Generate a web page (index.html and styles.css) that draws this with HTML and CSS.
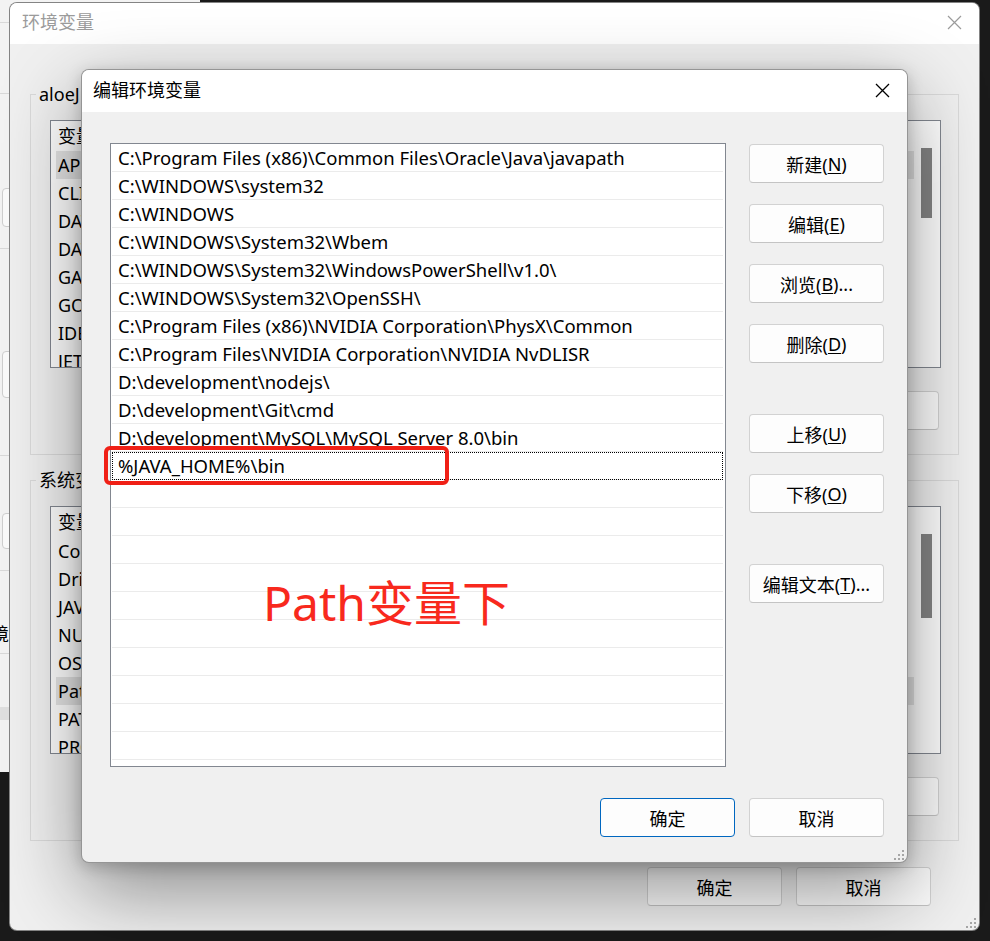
FILE: index.html
```html
<!DOCTYPE html>
<html lang="zh-CN">
<head>
<meta charset="utf-8">
<title>编辑环境变量</title>
<link rel="stylesheet" href="styles.css">
</head>
<body>
<div class="behind">
  <div class="bh-seg bh-s1"></div>
  <div class="bh-seg bh-s2"></div>
  <div class="bh-btn bh-b1"></div>
  <div class="bh-line bh-l1"></div>
  <div class="bh-btn bh-b2"></div>
  <div class="bh-line bh-l2"></div>
  <div class="bh-btn bh-b3"></div>
  <div class="bh-line bh-l3"></div>
  <div class="bh-text">环境</div>
  <div class="bh-line bh-l4"></div>
  <div class="bh-band"></div>
</div>

<div class="window outer">
  <div class="titlebar">
    <span class="title-text">环境变量</span>
    <svg class="close" width="15" height="15" viewBox="0 0 15 15"><path d="M1 1L14 14M14 1L1 14" stroke="currentColor" stroke-width="1.2" fill="none"/></svg>
  </div>
  <div class="outer-body">
    <div class="group">
      <div class="group-label">aloeJ 的用户变量(<u>U</u>)</div>
      <div class="vlist">
        <div class="vlist-main">
          <div class="vhead">变量</div>
          <div class="vrow sel">APPCODE_VM_OPTIONS</div>
          <div class="vrow">CLION_VM_OPTIONS</div>
          <div class="vrow">DATAGRIP_VM_OPTIONS</div>
          <div class="vrow">DATASPELL_VM_OPTIONS</div>
          <div class="vrow">GATEWAY_VM_OPTIONS</div>
          <div class="vrow">GOLAND_VM_OPTIONS</div>
          <div class="vrow">IDEA_VM_OPTIONS</div>
          <div class="vrow">JETBRAINSCLIENT_VM_OPTIONS</div>
        </div>
        <div class="vscroll"><div class="thumb thumb-user"></div></div>
      </div>
      <div class="gbtns">
        <div class="btn"></div>
        <div class="btn"></div>
        <div class="btn"></div>
      </div>
    </div>
    <div class="group">
      <div class="group-label">系统变量(<u>S</u>)</div>
      <div class="vlist">
        <div class="vlist-main">
          <div class="vhead">变量</div>
          <div class="vrow">ComSpec</div>
          <div class="vrow">DriverData</div>
          <div class="vrow">JAVA_HOME</div>
          <div class="vrow">NUMBER_OF_PROCESSORS</div>
          <div class="vrow">OS</div>
          <div class="vrow sel">Path</div>
          <div class="vrow">PATHEXT</div>
          <div class="vrow">PROCESSOR_ARCHITECTURE</div>
        </div>
        <div class="vscroll"><div class="thumb thumb-sys"></div></div>
      </div>
      <div class="gbtns">
        <div class="btn"></div>
        <div class="btn"></div>
        <div class="btn"></div>
      </div>
    </div>
    <div class="outer-foot">
      <div class="btn">确定</div>
      <div class="btn">取消</div>
    </div>
  </div>
  <svg class="grip" width="12" height="12" viewBox="0 0 12 12"><g fill="#a6a6a6"><rect x="9" y="1" width="2" height="2"/><rect x="5" y="5" width="2" height="2"/><rect x="9" y="5" width="2" height="2"/><rect x="1" y="9" width="2" height="2"/><rect x="5" y="9" width="2" height="2"/><rect x="9" y="9" width="2" height="2"/></g></svg>
</div>

<div class="window dialog">
  <div class="titlebar">
    <span class="title-text">编辑环境变量</span>
    <svg class="close" width="15" height="15" viewBox="0 0 15 15"><path d="M1 1L14 14M14 1L1 14" stroke="currentColor" stroke-width="1.3" fill="none"/></svg>
  </div>
  <div class="dbody">
    <div class="dmain">
      <div class="plist">
        <div class="prow">C:\Program Files (x86)\Common Files\Oracle\Java\javapath</div>
        <div class="prow">C:\WINDOWS\system32</div>
        <div class="prow">C:\WINDOWS</div>
        <div class="prow">C:\WINDOWS\System32\Wbem</div>
        <div class="prow">C:\WINDOWS\System32\WindowsPowerShell\v1.0\</div>
        <div class="prow">C:\WINDOWS\System32\OpenSSH\</div>
        <div class="prow">C:\Program Files (x86)\NVIDIA Corporation\PhysX\Common</div>
        <div class="prow">C:\Program Files\NVIDIA Corporation\NVIDIA NvDLISR</div>
        <div class="prow">D:\development\nodejs\</div>
        <div class="prow">D:\development\Git\cmd</div>
        <div class="prow">D:\development\MySQL\MySQL Server 8.0\bin</div>
        <div class="prow edit">%JAVA_HOME%\bin</div>
        <div class="prow"></div>
        <div class="prow"></div>
        <div class="prow"></div>
        <div class="prow"></div>
        <div class="prow"></div>
        <div class="prow"></div>
        <div class="prow"></div>
        <div class="prow"></div>
        <div class="prow"></div>
        <div class="prow"></div>
        <div class="prow"></div>
      </div>
      <div class="dbtns">
        <div class="btn">新建(<u>N</u>)</div>
        <div class="btn">编辑(<u>E</u>)</div>
        <div class="btn">浏览(<u>B</u>)...</div>
        <div class="btn">删除(<u>D</u>)</div>
        <div class="btn sp">上移(<u>U</u>)</div>
        <div class="btn">下移(<u>O</u>)</div>
        <div class="btn sp">编辑文本(<u>T</u>)...</div>
      </div>
    </div>
    <div class="dfoot">
      <div class="btn primary">确定</div>
      <div class="btn">取消</div>
    </div>
  </div>
  <svg class="grip" width="12" height="12" viewBox="0 0 12 12"><g fill="#a6a6a6"><rect x="9" y="1" width="2" height="2"/><rect x="5" y="5" width="2" height="2"/><rect x="9" y="5" width="2" height="2"/><rect x="1" y="9" width="2" height="2"/><rect x="5" y="9" width="2" height="2"/><rect x="9" y="9" width="2" height="2"/></g></svg>
</div>

<div class="anno-box"></div>
<div class="anno-text">Path变量下</div>
</body>
</html>
```

FILE: styles.css
```css
* { box-sizing: border-box; }
html, body { margin: 0; padding: 0; }
body {
  width: 990px;
  height: 941px;
  overflow: hidden;
  position: relative;
  background: #1a1a1a;
  font-family: "Noto Sans", "Noto Sans CJK SC", sans-serif;
  font-size: 18px;
  color: #000;
}
u { text-underline-offset: 2px; }

/* window partly visible behind */
.behind {
  position: absolute;
  left: 0; top: 0;
  width: 200px; height: 772px;
  background: #f3f3f3;
  display: flex;
  flex-direction: column;
}
.bh-seg { border-bottom: 1px solid #d9d9d9; flex: none; }
.bh-s1 { height: 23px; }
.bh-s2 { height: 71px; }
.bh-btn { flex: none; margin-left: 2px; border: 1px solid #cfcfcf; border-radius: 4px; background: #fbfbfb; }
.bh-b1 { margin-top: 94px; height: 39px; }
.bh-b2 { margin-top: 102px; height: 47px; }
.bh-b3 { margin-top: 57px; height: 36px; }
.bh-line { flex: none; height: 1px; background: #d9d9d9; }
.bh-l1 { margin-top: 21px; }
.bh-l2 { margin-top: 57px; }
.bh-l3 { margin-top: 21px; }
.bh-text { margin-top: 50px; margin-left: -27px; line-height: 26px; font-size: 18px; }
.bh-l4 { margin-top: 6px; }
.bh-band { margin-top: 53px; height: 13px; background: #e0e0e0; }

/* windows */
.window {
  position: absolute;
  background: #f0f0f0;
  border-radius: 8px;
  overflow: hidden;
  display: flex;
  flex-direction: column;
}
.titlebar {
  flex: none;
  background: #fff;
  display: flex;
  align-items: center;
  justify-content: space-between;
}
.title-text { font-size: 18px; line-height: 24px; }
.close { display: block; }

.outer {
  left: 9px; top: 2px;
  width: 971px; height: 929px;
  border: 1px solid rgba(0, 0, 0, 0.45);
}
.outer .titlebar {
  height: 41px;
  padding: 0 17px 3px 12px;
  color: #9b9b9b;
}
.outer-body {
  flex: 1;
  display: flex;
  flex-direction: column;
  padding-top: 50px;
}
.group {
  margin: 0 20px;
  border: 1px solid #dadada;
  padding: 0 17px 24px 19px;
  display: flex;
  flex-direction: column;
}
.group + .group { margin-top: 25px; }
.group-label {
  align-self: flex-start;
  margin: -13px 0 0 -14px;
  padding: 0 3px;
  line-height: 24px;
  background: #f0f0f0;
  white-space: nowrap;
}
.vlist {
  margin-top: 14px;
  height: 248px;
  border: 1px solid #828790;
  background: #fff;
  display: flex;
}
.vlist-main { flex: 1; overflow: hidden; }
.vhead {
  height: 30px;
  line-height: 30px;
  padding-left: 7px;
  white-space: nowrap;
}
.vrow {
  height: 28px;
  line-height: 28px;
  margin-left: 5px;
  padding-left: 2px;
  white-space: nowrap;
}
.vrow.sel { background: #e5e5e5; }
.vscroll { width: 26px; flex: none; padding: 27px 0 0 7px; }
.thumb { width: 11px; background: #858585; }
.thumb-user { height: 70px; }
.thumb-sys { height: 84px; }
.gbtns {
  display: flex;
  justify-content: flex-end;
  gap: 14px;
  margin-top: 23px;
  padding-right: 2px;
}
.outer-foot {
  display: flex;
  justify-content: flex-end;
  gap: 14px;
  margin-top: 26px;
  padding-right: 48px;
}

.btn {
  flex: none;
  width: 135px;
  height: 39px;
  border: 1px solid #d2d2d2;
  border-bottom-color: #c4c4c4;
  border-radius: 4px;
  background: #fdfdfd;
  display: flex;
  align-items: center;
  justify-content: center;
  font-size: 18px;
  white-space: nowrap;
}
.btn.primary { border-color: #0067c0; }

/* dialog */
.dialog {
  left: 81px; top: 69px;
  width: 827px; height: 794px;
  border: 1px solid rgba(0, 0, 0, 0.38);
  box-shadow: 0 28px 80px rgba(0, 0, 0, 0.42), 0 4px 16px rgba(0, 0, 0, 0.2);
}
.dialog .titlebar {
  height: 42px;
  padding: 0 17px 2px 11px;
  color: #000;
}
.dbody {
  flex: 1;
  display: flex;
  flex-direction: column;
  padding: 31px 23px 25px 28px;
}
.dmain { display: flex; gap: 23px; }
.plist {
  width: 616px;
  height: 624px;
  flex: none;
  border: 1px solid #828790;
  background: #fff;
  overflow: hidden;
}
.prow {
  height: 28px;
  margin: 0 2px 0 1px;
  padding-left: 6px;
  border-bottom: 1px solid #ebebeb;
  line-height: 28px;
  font-size: 18.5px;
  white-space: nowrap;
}
.prow.edit { outline: 1px dotted #000; outline-offset: -1px; }
.dbtns {
  display: flex;
  flex-direction: column;
  gap: 21px;
  padding-top: 1px;
}
.btn.sp { margin-top: 30px; }
.dfoot {
  display: flex;
  justify-content: flex-end;
  gap: 14px;
  margin-top: 31px;
}

.grip { position: absolute; right: 2px; bottom: 1px; }

/* screenshot annotation */
.anno-box {
  position: absolute;
  left: 104px; top: 446px;
  width: 345px; height: 39px;
  border: 4px solid #f02016;
  border-radius: 6px;
}
.anno-text {
  position: absolute;
  left: 263px; top: 579px;
  font-size: 48px;
  line-height: 1;
  color: #f8291d;
  white-space: nowrap;
}
```
